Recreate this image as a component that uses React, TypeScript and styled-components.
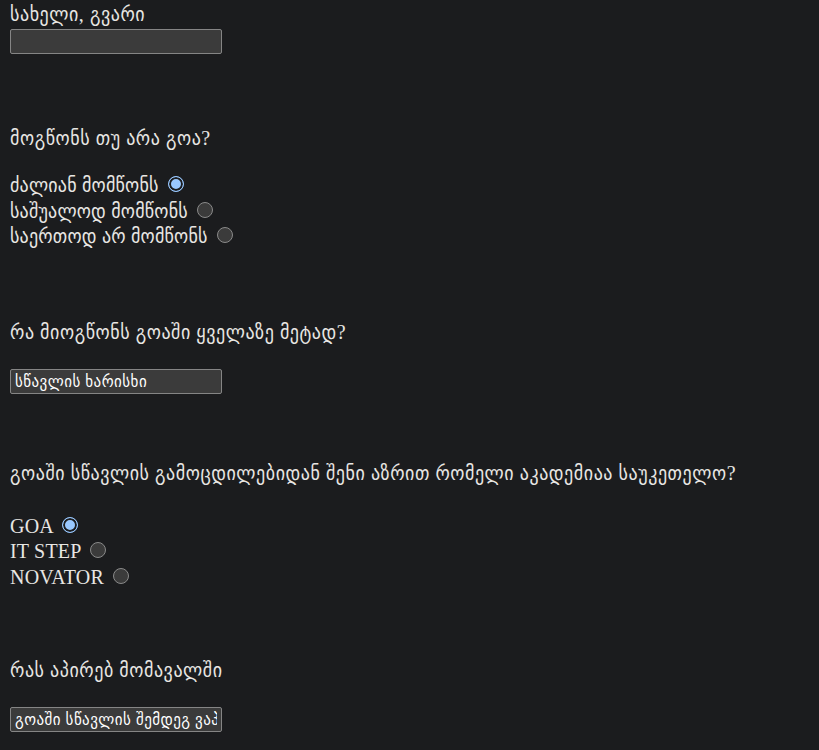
import styled, { createGlobalStyle } from 'styled-components'

const GlobalStyle = createGlobalStyle`
  html, body {
    margin: 0;
    padding: 0;
    background: #1b1c1e;
  }
  body {
    min-height: 100vh;
    font-family: "Liberation Serif", "DejaVu Sans Condensed", "DejaVu Sans", serif;
    color: #e8e6e3;
  }
`

const Form = styled.form`
  display: flex;
  flex-direction: column;
  align-items: flex-start;
  padding: 2px 10px 0;
`

const Label = styled.div<{ $gap?: number }>`
  height: 25px;
  line-height: 25px;
  font-size: 20px;
  letter-spacing: 0.55px;
  white-space: nowrap;
  margin-top: ${(p) => p.$gap ?? 0}px;
`

const TextInput = styled.input<{ $gap?: number }>`
  box-sizing: border-box;
  width: 212px;
  height: 25px;
  margin: ${(p) => p.$gap ?? 0}px 0 0;
  padding: 0 4px;
  background: #3b3b3b;
  border: 1px solid #858585;
  border-radius: 2px;
  color: #ffffff;
  font-family: "Liberation Serif", "DejaVu Sans Condensed", "DejaVu Sans", serif;
  font-size: 16.7px;
  letter-spacing: 0.45px;
  outline: none;
`

const Options = styled.div<{ $gap: number }>`
  display: flex;
  flex-direction: column;
  margin-top: ${(p) => p.$gap}px;
`

const Option = styled.label`
  height: 25.5px;
  line-height: 25.5px;
  font-size: 20px;
  letter-spacing: 0.2px;
  white-space: nowrap;
`

const Radio = styled.input`
  appearance: none;
  box-sizing: border-box;
  display: inline-block;
  width: 16px;
  height: 16px;
  margin: 0 0 0 4px;
  vertical-align: 0px;
  border-radius: 50%;
  border: 1.5px solid #8a8a8a;
  background: #3b3b3b;

  &:checked {
    border: 1.5px solid #99c8ff;
    background: #99c8ff;
    box-shadow: inset 0 0 0 2px #1b1c1e;
  }
`

const likes = ['ძალიან მომწონს', 'საშუალოდ მომწონს', 'საერთოდ არ მომწონს']
const academies = ['GOA', 'IT STEP', 'NOVATOR']

export default function App() {
  return (
    <>
      <GlobalStyle />
      <Form>
        <Label>სახელი, გვარი</Label>
        <TextInput type="text" $gap={2} />

        <Label $gap={72}>მოგწონს თუ არა გოა?</Label>
        <Options $gap={22}>
          {likes.map((l, i) => (
            <Option key={l}>
              {l} <Radio type="radio" name="like" defaultChecked={i === 0} />
            </Option>
          ))}
        </Options>

        <Label $gap={70}>რა მიოგწონს გოაში ყველაზე მეტად?</Label>
        <TextInput type="text" $gap={24} defaultValue="სწავლის ხარისხი" />

        <Label $gap={67}>
          გოაში სწავლის გამოცდილებიდან შენი აზრით რომელი აკადემიაა საუკეთელო?
        </Label>
        <Options $gap={28}>
          {academies.map((a, i) => (
            <Option key={a}>
              {a} <Radio type="radio" name="academy" defaultChecked={i === 0} />
            </Option>
          ))}
        </Options>

        <Label $gap={68}>რას აპირებ მომავალში</Label>
        <TextInput type="text" $gap={24} defaultValue="გოაში სწავლის შემდეგ ვაპირებ" />
      </Form>
    </>
  )
}
